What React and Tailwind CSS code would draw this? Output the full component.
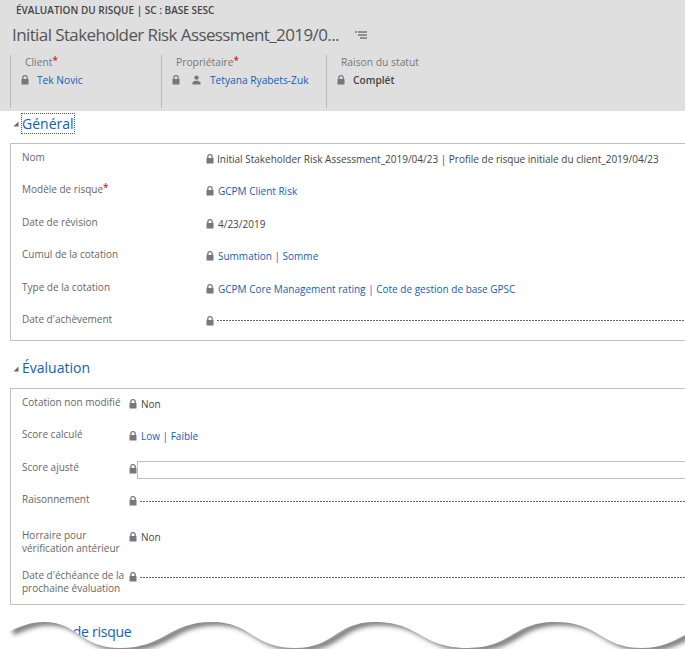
const FONT = { fontFamily: '"Open Sans", "Noto Sans", sans-serif' };

function Lock({ className = "" }) {
  return (
    <svg width="8" height="10" viewBox="0 0 8 10" className={`shrink-0 ${className}`}>
      <path d="M1.8 4.5V2.8a2.2 2.2 0 0 1 4.4 0v1.7" fill="none" stroke="#7d7d82" strokeWidth="1.4" />
      <rect x="0.5" y="4" width="7" height="5.5" rx="0.5" fill="#77777c" />
    </svg>
  );
}

function Person() {
  return (
    <svg width="9" height="10" viewBox="0 0 9 10" className="shrink-0">
      <circle cx="4.5" cy="2.6" r="2.2" fill="#77777c" />
      <path d="M0.5 9.5V7.2L3 5.8h3l2.5 1.4v2.3z" fill="#77777c" />
    </svg>
  );
}

function Req() {
  return <span className="text-[#c00000] text-[10px] leading-none relative top-[-2px]">*</span>;
}

function HeaderField({ label, req, children, className }) {
  return (
    <div className={`border-l border-[#b9b9b9] h-[53px] ${className}`}>
      <div className="pl-[14px] text-[10.3px] leading-[14px] text-[#777]">
        {label}
        {req && <Req />}
      </div>
      <div className="mt-[4px] flex items-center pl-[10px] text-[10.2px] leading-[14px]">{children}</div>
    </div>
  );
}

const link = "text-[#1160b7]";
const value = "text-[#444]";

function Row({ label, req, children, h = "h-[32.4px]", labelW }) {
  return (
    <div className={`flex items-start ${h}`}>
      <div className={`${labelW} shrink-0 text-[10px] leading-[12.5px] text-[#666]`}>
        {label}
        {req && <Req />}
      </div>
      <div className="flex-1 min-w-0 flex items-center h-[14px] mt-px text-[10px] leading-[14px] whitespace-nowrap">
        {children}
      </div>
    </div>
  );
}

function SectionTitle({ children, focus, className = "" }) {
  return (
    <div className="flex items-center h-[22px] pl-[13px]">
      <svg width="6" height="6" viewBox="0 0 6 6" className="shrink-0 mr-[3px] mt-[2px]">
        <path d="M5.5 0.5V5.5H0.5z" fill="#666" />
      </svg>
      <span
        className={`text-[14px] text-[#1160b7] ${className} ${
          focus ? "leading-[19px] outline-1 outline-dotted outline-[#555]" : "leading-[18px]"
        }`}
      >
        {children}
      </span>
    </div>
  );
}

function Dashes() {
  return (
    <div className="flex-1 h-px ml-[3px] mr-[-2px] bg-[repeating-linear-gradient(90deg,#666_0,#666_2px,transparent_2px,transparent_3px)]" />
  );
}

const WAVE =
  "M8 632 C18 627 30 622 44 622 C78 622 80 648 120 648 C165 648 168 622 212 622 C252 622 252 648 295 648 C335 648 335 622 375 622 C420 622 420 648 468 648 C512 648 512 622 555 622 C600 622 600 648 642 648 C660 648 672 642 685 635";

function Torn() {
  return (
    <svg
      width="685"
      height="649"
      viewBox="0 0 685 649"
      className="absolute left-0 top-0 pointer-events-none"
      aria-hidden="true"
    >
      <defs>
        <filter id="b" x="-5%" y="-200%" width="110%" height="500%">
          <feGaussianBlur stdDeviation="2.4" />
        </filter>
        <clipPath id="c">
          <path d={`${WAVE} L685 649 L0 649 L8 632 Z`} />
        </clipPath>
      </defs>
      <path d={`${WAVE} L685 649 L0 649 L8 632 Z`} fill="#fff" />
      <g clipPath="url(#c)">
        <path d={WAVE} fill="none" stroke="#6a6a6a" strokeWidth="6" filter="url(#b)" transform="translate(5 0)" />
      </g>
    </svg>
  );
}

export default function App() {
  return (
    <div className="relative w-[685px] h-[649px] overflow-hidden bg-white" style={FONT}>
      <header className="bg-[#dfdfdf] h-[111px]">
        <div className="pl-4 pt-[3px] text-[10px] leading-[14px] font-semibold text-[#444]">
          ÉVALUATION DU RISQUE | SC : BASE SESC
        </div>
        <div className="flex items-center pl-3 mt-[5px] h-[26px]">
          <span className="text-[17px] leading-[26px] tracking-[-0.6px] text-[#555] whitespace-nowrap">
            Initial Stakeholder Risk Assessment_2019/0...
          </span>
          <svg width="12" height="8" viewBox="0 0 12 8" className="ml-[16px]">
            <path d="M0 1h2M3 1h9M3 4h9M5 7h7" stroke="#444" strokeWidth="1.2" fill="none" />
          </svg>
        </div>
        <div className="flex pl-[10px] mt-[7px]">
          <HeaderField label="Client" req className="w-[151px]">
            <Lock />
            <span className={`ml-[8px] ${link}`}>Tek Novic</span>
          </HeaderField>
          <HeaderField label="Propriétaire" req className="w-[165px]">
            <Lock />
            <span className="ml-[12px]"><Person /></span>
            <span className={`ml-[9px] ${link}`}>Tetyana Ryabets-Zuk</span>
          </HeaderField>
          <HeaderField label="Raison du statut" className="flex-1">
            <Lock />
            <span className="ml-[8px] font-semibold text-[#444]">Complét</span>
          </HeaderField>
        </div>
      </header>

      <section className="pt-[1px]">
        <SectionTitle focus>Général</SectionTitle>
        <div className="ml-[10px] mt-[9px] w-[690px] h-[198px] border border-[#c0c0c0] pl-[11px] pt-[7px]">
          <Row label="Nom" labelW="w-[184px]">
            <Lock className="mr-[3px]" />
            <span className={value}>
              Initial Stakeholder Risk Assessment_2019/04/23 | Profile de risque initiale du client_2019/04/23
            </span>
          </Row>
          <Row label="Modèle de risque" req labelW="w-[184px]">
            <Lock className="mr-[4px]" />
            <span className={link}>GCPM Client Risk</span>
          </Row>
          <Row label="Date de révision" labelW="w-[184px]">
            <Lock className="mr-[4px]" />
            <span className={value}>4/23/2019</span>
          </Row>
          <Row label="Cumul de la cotation" labelW="w-[184px]">
            <Lock className="mr-[4px]" />
            <span className={link}>Summation | Somme</span>
          </Row>
          <Row label="Type de la cotation" labelW="w-[184px]">
            <Lock className="mr-[4px]" />
            <span className={link}>GCPM Core Management rating | Cote de gestion de base GPSC</span>
          </Row>
          <Row label="Date d'achèvement" labelW="w-[184px]">
            <Lock />
            <Dashes />
          </Row>
        </div>
      </section>

      <section className="mt-[16px]">
        <SectionTitle>Évaluation</SectionTitle>
        <div className="ml-[10px] mt-[9px] w-[690px] h-[217px] border border-[#c0c0c0] pl-[11px] pt-[7px]">
          <Row label="Cotation non modifié" labelW="w-[107px]">
            <Lock className="mr-[4px]" />
            <span className={value}>Non</span>
          </Row>
          <Row label="Score calculé" labelW="w-[107px]">
            <Lock className="mr-[4px]" />
            <span className={link}>Low | Faible</span>
          </Row>
          <Row label="Score ajusté" labelW="w-[107px]">
            <Lock />
            <div className="flex-1 h-[18px] mt-[2px] bg-white border border-[#c0c0c0] mr-[-2px]" />
          </Row>
          <Row label="Raisonnement" labelW="w-[107px]" h="h-[36px]">
            <Lock />
            <Dashes />
          </Row>
          <Row
            label={<>Horraire pour<br />vérification antérieur</>}
            labelW="w-[107px]"
            h="h-[40px]"
          >
            <Lock className="mr-[4px]" />
            <span className={value}>Non</span>
          </Row>
          <Row label={<>Date d'échéance de la<br />prochaine évaluation</>} labelW="w-[107px]" h="h-[28px]">
            <Lock />
            <Dashes />
          </Row>
        </div>
      </section>

      <section className="mt-[16px]">
        <SectionTitle className="tracking-[-0.25px]">Modèle de risque</SectionTitle>
      </section>

      <Torn />
    </div>
  );
}
